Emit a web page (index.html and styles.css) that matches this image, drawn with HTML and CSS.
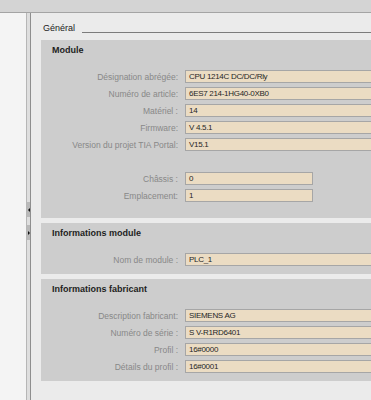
FILE: index.html
```html
<!DOCTYPE html>
<html lang="fr">
<head>
  <meta charset="UTF-8" />
  <meta name="viewport" content="width=device-width, initial-scale=1.0" />
  <title>Propriétés - Général</title>
  <link rel="stylesheet" href="styles.css">
</head>
<body>
  <div id="topbar"></div>
  <div id="workspace">
    <div id="tree"></div>
    <div id="splitter">
      <div class="handle collapse"></div>
      <div class="handle expand"></div>
    </div>
    <div id="main">
      <div class="tab-head">
        <span class="tab-title">Général</span>
        <span class="tab-rule"></span>
      </div>

      <div class="section section-module">
        <div class="section-title">Module</div>
        <div class="row"><span class="label">Désignation abrégée:</span><span class="field">CPU 1214C DC/DC/Rly</span></div>
        <div class="row"><span class="label">Numéro de article:</span><span class="field">6ES7 214-1HG40-0XB0</span></div>
        <div class="row"><span class="label">Matériel :</span><span class="field">14</span></div>
        <div class="row"><span class="label">Firmware:</span><span class="field">V 4.5.1</span></div>
        <div class="row"><span class="label">Version du projet TIA Portal:</span><span class="field">V15.1</span></div>
        <div class="spacer"></div>
        <div class="row"><span class="label">Châssis :</span><span class="field short">0</span></div>
        <div class="row"><span class="label">Emplacement:</span><span class="field short">1</span></div>
      </div>

      <div class="section">
        <div class="section-title">Informations module</div>
        <div class="row"><span class="label">Nom de module :</span><span class="field">PLC_1</span></div>
      </div>

      <div class="section">
        <div class="section-title">Informations fabricant</div>
        <div class="row"><span class="label">Description fabricant:</span><span class="field">SIEMENS AG</span></div>
        <div class="row"><span class="label">Numéro de série :</span><span class="field">S V-R1RD6401</span></div>
        <div class="row"><span class="label">Profil :</span><span class="field">16#0000</span></div>
        <div class="row"><span class="label">Détails du profil :</span><span class="field">16#0001</span></div>
      </div>
    </div>
  </div>
</body>
</html>
```

FILE: styles.css
```css
body {
  margin: 0;
  padding: 0;
  width: 371px;
  height: 400px;
  overflow: hidden;
  background-color: #e9e9e9;
  font-family: "Liberation Sans", Arial, sans-serif;
}
#topbar {
  height: 12px;
  background-color: #d4d4d4;
  border-bottom: 1px solid #a4a4a4;
}
#workspace {
  display: flex;
  height: 387px;
}
#tree {
  width: 26px;
  background: repeating-linear-gradient(to bottom, #f4f4f4 0 14px, #e3e3e3 14px 15px);
  background-size: 100% 14px;
}
#splitter {
  width: 3px;
  background-color: #dedede;
  border-left: 1px solid #b6b6b6;
  border-right: 1px solid #8e8e8e;
  display: flex;
  flex-direction: column;
  padding-top: 189px;
  gap: 8px;
}
.handle {
  height: 15px;
  background-color: #b9b9b9;
  display: flex;
  align-items: center;
  justify-content: center;
}
.handle::after {
  content: "";
  width: 0;
  height: 0;
  border-top: 2px solid transparent;
  border-bottom: 2px solid transparent;
}
.collapse::after { border-right: 2px solid #111; }
.expand::after { border-left: 2px solid #111; }
#main {
  flex: 1;
  overflow: hidden;
  padding-left: 10px;
  background-color: #ebebeb;
}
.tab-head {
  display: flex;
  align-items: flex-end;
  height: 21px;
  margin-left: 2px;
  margin-bottom: 6px;
}
.tab-title {
  font-size: 9px;
  line-height: 11px;
  color: #222;
}
.tab-rule {
  flex: 1;
  height: 1px;
  margin-left: 7px;
  margin-bottom: 1px;
  background-color: #7c7c7c;
}
.section {
  background-color: #cdcdcd;
  padding-bottom: 8px;
  margin-bottom: 5px;
}
.section-module { padding-bottom: 16px; }
.section-title {
  font-size: 9px;
  font-weight: bold;
  line-height: 12px;
  color: #1e1e1e;
  padding: 4px 0 14px 11px;
}
.row {
  display: flex;
  align-items: center;
  height: 13px;
  margin-bottom: 4px;
}
.row:last-child { margin-bottom: 0; }
.spacer { height: 17px; }
.label {
  width: 144px;
  flex-shrink: 0;
  box-sizing: border-box;
  padding-right: 7px;
  text-align: right;
  font-size: 8.5px;
  color: #888;
  white-space: nowrap;
}
.field {
  box-sizing: border-box;
  flex-shrink: 0;
  width: 220px;
  height: 13px;
  padding-left: 3px;
  border: 1px solid #a6a6a6;
  background-color: #ebdcc3;
  font-size: 8px;
  line-height: 11px;
  letter-spacing: -0.3px;
  color: #262626;
  white-space: nowrap;
}
.field.short { width: 128px; }
```
